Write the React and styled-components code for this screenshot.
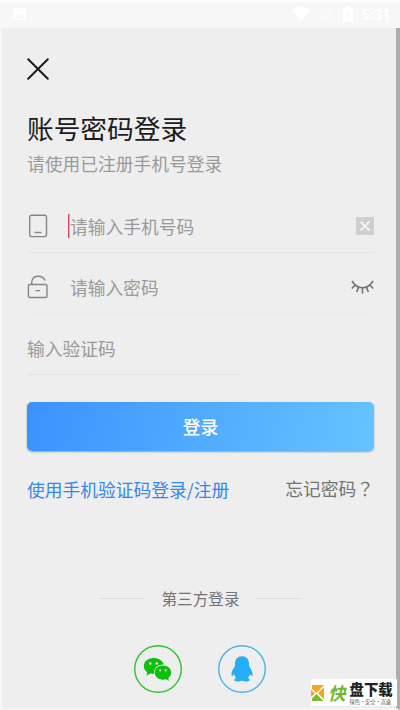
import React from 'react';
import styled, { createGlobalStyle } from 'styled-components';

const palette = {
  page: '#eeeeee',
  bar: '#f7f7f7',
  ink: '#1c1c1e',
  gray: '#999999',
  icon: '#858585',
  line: '#e4e4e4',
  blue: '#3388e8',
};

const GlobalStyle = createGlobalStyle`
  * {
    box-sizing: border-box;
  }
  body {
    margin: 0;
    background: ${palette.page};
    font-family: 'Noto Sans CJK SC', 'Noto Sans', sans-serif;
  }
  svg {
    display: block;
    flex-shrink: 0;
  }
`;

const Screen = styled.div`
  position: relative;
  width: 400px;
  height: 710px;
  overflow: hidden;
  background: ${palette.page};
`;

const StatusBar = styled.div`
  display: flex;
  justify-content: space-between;
  height: 28px;
  background: ${palette.bar};
  border-top: 2px solid #fdfdfd;
`;

const Body = styled.div`
  height: 682px;
  padding: 30px 22px 0 25px;
  border-left: 2px solid #f7f7f7;
  border-right: 4px solid #adadad;
  border-bottom: 2px solid #f4f4f4;
`;

const Title = styled.h1`
  margin: 28px 0 0;
  font-size: 26.7px;
  font-weight: 400;
  line-height: 40px;
  color: ${palette.ink};
`;

const Subtitle = styled.p`
  margin: 1px 0 0;
  font-size: 17.75px;
  line-height: 28px;
  color: ${palette.gray};
`;

const Form = styled.div`
  margin-top: 15px;
`;

const Field = styled.div`
  display: flex;
  align-items: center;
  width: ${(props) => props.$width || '347px'};
  height: 61px;
  padding-top: 7px;
  border-bottom: 1px solid ${(props) => props.$line || palette.line};
`;

const Placeholder = styled.div`
  flex: 1;
  margin-left: ${(props) => (props.$icon ? '20px' : 0)};
  font-size: 17.75px;
  line-height: 24px;
  color: ${palette.gray};
  padding-left: ${(props) => (props.$icon ? '1px' : 0)};
  box-shadow: ${(props) => (props.$focused ? 'inset 1px 0 0 #e0a0ae, -1px 0 0 #d4486c' : 'none')};
`;

const LoginButton = styled.button`
  display: block;
  width: 347px;
  height: 49px;
  margin-top: 27px;
  padding: 0;
  border: 0;
  border-radius: 5px;
  background: linear-gradient(100deg, #3b92fe, #66c3ff);
  box-shadow: 0 1px 2px rgba(0, 0, 0, 0.35);
  font-family: inherit;
  font-size: 17.75px;
  font-weight: 500;
  line-height: 47px;
  color: #fff;
`;

const Links = styled.div`
  display: flex;
  justify-content: space-between;
  width: 347px;
  margin-top: 24px;
  font-size: 17.75px;
  line-height: 28px;
`;

const TextLink = styled.span`
  color: ${(props) => props.$color};
  position: relative;
`;

/* the TC face centres the full-width question mark */
const ForgotLink = styled(TextLink)`
  font-family: 'Noto Sans CJK TC', sans-serif;
  line-height: 26px;
`;

const ThirdParty = styled.div`
  display: flex;
  align-items: center;
  justify-content: center;
  gap: 17px;
  width: 347px;
  margin-top: 83px;
  font-size: 15.6px;
  line-height: 24px;
  color: #747474;
`;

const Rule = styled.span`
  width: 45px;
  height: 1px;
  background: #dddddd;
`;

const Socials = styled.div`
  display: flex;
  gap: 36px;
  margin: 35px 0 0 107px;
`;

const Social = styled.div`
  display: flex;
  align-items: center;
  justify-content: center;
  width: 48px;
  height: 48px;
  border-radius: 50%;
  box-shadow: inset 0 0 0 1.4px ${(props) => props.$color};
`;

const Watermark = styled.div`
  position: absolute;
  right: 3px;
  bottom: 4px;
  display: flex;
  align-items: center;
  width: 86px;
  height: 27px;
  background: #fff;
`;

const BrandMark = styled.span`
  margin-left: 4px;
  font-size: 17.5px;
  font-weight: 700;
  font-style: italic;
  line-height: 27px;
  color: #74b72b;
`;

const BrandText = styled.div`
  margin-left: 4px;
  white-space: nowrap;
`;

const BrandName = styled.div`
  font-size: 14.4px;
  font-weight: 900;
  line-height: 16px;
  color: #222;
`;

const BrandSlogan = styled.div`
  height: 7px;
  margin-top: 1px;
  font-size: 5.2px;
  line-height: 7px;
  color: #555;
`;

const StatusIcons = () => (
  <StatusBar>
    <svg width="40" height="26" viewBox="0 2 40 26">
      <path d="M13 8h13v12H13zM15 16l3-2 3 2 3-1v3h-9z" fill="#fff" fillRule="evenodd" opacity=".8" />
    </svg>
    <svg width="120" height="26" viewBox="280 2 120 26" fill="#fff">
      <path d="M292 10q9-6 18 0l-9 12z" />
      <path d="M331 8v12h-12z" opacity=".3" />
      <path d="M343 8h3V6h4v2h3v14h-10zM349 10l-4 5h3l-1 5 4-6h-3z" fillRule="evenodd" />
      <text x="361" y="20" fontSize="15" fontFamily="Roboto, sans-serif" fontWeight="500">
        5:31
      </text>
    </svg>
  </StatusBar>
);

const CloseIcon = () => (
  <svg width="22" height="22" viewBox="0 0 22 22" stroke={palette.ink} strokeWidth="2" strokeLinecap="round">
    <path d="M1.2 1.2l19.6 19.6M20.8 1.2L1.2 20.8" />
  </svg>
);

const PhoneIcon = () => (
  <svg width="22" height="24" viewBox="0 0 22 24" fill="none" stroke={palette.icon} strokeWidth="1.4">
    <rect x="2.7" y="1.2" width="16.8" height="21.4" rx="2" />
    <path d="M7.5 18.5h7" />
  </svg>
);

const LockIcon = () => (
  <svg width="22" height="24" viewBox="0 0 22 24" fill="none" stroke={palette.icon} strokeWidth="1.4">
    <rect x="1.4" y="9.5" width="18.6" height="13" rx="1.6" />
    <path d="M4.7 9.5V7.3C5.2-.5 15.5-.5 18 5.5M8.5 15.6h4.6" />
  </svg>
);

const ClearIcon = () => (
  <svg width="18" height="18" viewBox="0 0 18 18">
    <path d="M0 0h18v18H0z" fill="#cfcfcf" />
    <path d="M4.5 4.5l9 9M13.5 4.5l-9 9" stroke="#fafafa" strokeWidth="1.7" />
  </svg>
);

const EyeIcon = () => (
  <svg width="23" height="14" viewBox="0 0 23 14" fill="none" stroke="#707070" strokeWidth="1.6">
    <path d="M1 .8c5 9.2 16 9.2 21 0M4.2 5L.8 8.5M7.7 7.1L5.6 12M11.5 8v5.6M15.3 7.1l2.1 4.9M18.8 5l3.4 3.5" />
  </svg>
);

const WechatIcon = () => (
  <svg width="30" height="26" viewBox="0 0 30 26" fill="#0ebf0e">
    <path d="M10.5 2C4.7 2 .8 5.7.8 10c0 2.6 1.3 4.7 3.4 6.2L3.4 19.6l4-2c1 .3 2.2.4 3.7.4-.8-5.8 4-9.8 9.6-9.5C19.6 4.4 15.4 2 10.5 2z" />
    <path d="M20 9.6c-4.8 0-8.3 3.1-8.3 7s3.5 7.1 8.3 7.1c1.1 0 2.1-.2 3-.5l3 1.7-.8-2.8c1.8-1.3 3-3.2 3-5.5 0-3.9-3.6-7-8.2-7z" />
    <g fill="#eee">
      <circle cx="7.3" cy="7.5" r="1.2" />
      <circle cx="13.8" cy="7.5" r="1.2" />
      <circle cx="17.2" cy="14.3" r="1.1" />
      <circle cx="22.7" cy="14.3" r="1.1" />
    </g>
  </svg>
);

const QQIcon = () => (
  <svg width="22" height="26" viewBox="0 0 22 26" fill="#25adf5">
    <path d="M11 .3C6.7.3 4 3.5 4 7.6v2.5C2.3 12.7.2 16 .4 18.6c.1 2 1.1 1.6 2.7-.6.3 1.6 1 2.9 2.1 4-1.3.5-2 1.2-2 2 0 1.8 5.5 2 7.8.4 2.3 1.6 7.8 1.4 7.8-.4 0-.8-.7-1.5-2-2 1.1-1.1 1.8-2.4 2.1-4 1.6 2.2 2.6 2.6 2.7.6.2-2.6-1.9-5.9-3.6-8.5V7.6C18 3.5 15.3.3 11 .3z" />
  </svg>
);

const BrandLogo = () => (
  <svg width="13" height="18" viewBox="0 0 13 18">
    <path d="M1 1h12L5.5 9 1 4.5z" fill="#f5a623" />
    <path d="M0 5.5L4 9.5 0 13z" fill="#f5a623" />
    <path d="M1 17v-2.5L5.5 10l7 7z" fill="#7dba2c" />
    <path d="M13 3v12.5L7 9.3z" fill="#f5a623" />
  </svg>
);

const App = () => {
  return (
    <Screen>
      <GlobalStyle />
      <StatusIcons />
      <Body>
        <CloseIcon />
        <Title>账号密码登录</Title>
        <Subtitle>请使用已注册手机号登录</Subtitle>
        <Form>
          <Field>
            <PhoneIcon />
            <Placeholder $icon $focused>
              请输入手机号码
            </Placeholder>
            <ClearIcon />
          </Field>
          <Field $line="#e9e9e9">
            <LockIcon />
            <Placeholder $icon>请输入密码</Placeholder>
            <EyeIcon />
          </Field>
          <Field $width="213px">
            <Placeholder>输入验证码</Placeholder>
          </Field>
        </Form>
        <LoginButton>登录</LoginButton>
        <Links>
          <TextLink $color={palette.blue}>使用手机验证码登录/注册</TextLink>
          <ForgotLink $color="#737373">忘记密码？</ForgotLink>
        </Links>
        <ThirdParty>
          <Rule />
          第三方登录
          <Rule />
        </ThirdParty>
        <Socials>
          <Social $color="#2fc22f">
            <WechatIcon />
          </Social>
          <Social $color="#4ab2ea">
            <QQIcon />
          </Social>
        </Socials>
      </Body>
      <Watermark>
        <BrandLogo />
        <BrandMark>快</BrandMark>
        <BrandText>
          <BrandName>盘下载</BrandName>
          <BrandSlogan>绿色·安全·高速</BrandSlogan>
        </BrandText>
      </Watermark>
    </Screen>
  );
};

export default App;
